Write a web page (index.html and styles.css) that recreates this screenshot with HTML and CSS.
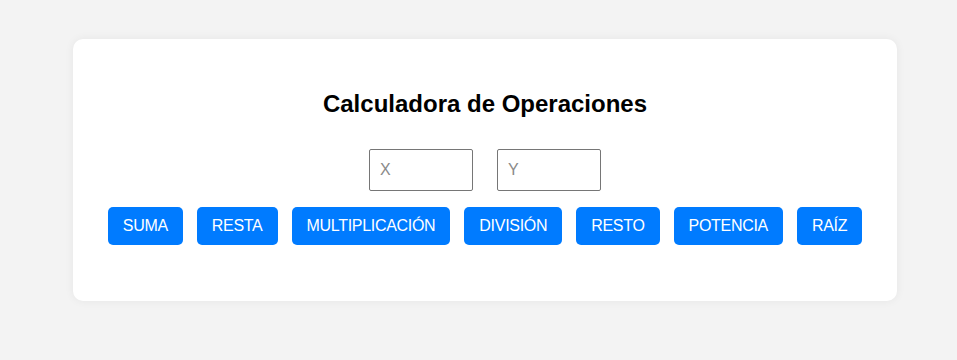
FILE: index.html
```html
<!DOCTYPE html>
<html lang="es">
<head>
    <meta charset="UTF-8">
    <meta name="viewport" content="width=device-width, initial-scale=1.0">
    <title>Calculadora de Operaciones</title>
    <link rel="stylesheet" href="styles.css">
</head>
<body>
    <div class="container">
        <h2>Calculadora de Operaciones</h2>
        <div class="inputs">
            <input type="text" id="x" placeholder="X">
            <input type="text" id="y" placeholder="Y">
        </div>
        <div class="buttons">
            <button>SUMA</button>
            <button>RESTA</button>
            <button>MULTIPLICACIÓN</button>
            <button>DIVISIÓN</button>
            <button>RESTO</button>
            <button>POTENCIA</button>
            <button>RAÍZ</button>
        </div>
    </div>
</body>
</html>
```

FILE: styles.css
```css
body, html {
    margin: 0;
    padding: 0;
    height: 100%;
    font-family: "Liberation Sans", Arial, sans-serif;
    background-color: #f3f3f3;
}

.container {
    box-sizing: border-box;
    width: 824px;
    margin: 39px 0 0 73px;
    padding: 30px 20px 56px;
    background: #fff;
    border-radius: 10px;
    text-align: center;
    box-shadow: 0 0 10px rgba(0, 0, 0, 0.06);
}

.container h2 {
    font-size: 24px;
    margin: 21px 0 31px;
    color: #000;
}

.inputs {
    display: flex;
    justify-content: center;
    gap: 24px;
    margin-bottom: 16px;
}

.inputs input {
    box-sizing: border-box;
    width: 104px;
    height: 42px;
    padding: 10px;
    font-size: 16px;
    font-family: "Liberation Sans", Arial, sans-serif;
    border: 1px solid #767676;
    border-radius: 2px;
}

.inputs input::placeholder {
    color: #8a8a8a;
}

.buttons {
    display: flex;
    justify-content: center;
    gap: 14px;
}

.buttons button {
    background-color: #007bff;
    color: white;
    border: none;
    border-radius: 5px;
    padding: 10px 15px;
    height: 38px;
    font-size: 16px;
    font-family: "Liberation Sans", Arial, sans-serif;
    letter-spacing: -0.3px;
    cursor: pointer;
}
```
